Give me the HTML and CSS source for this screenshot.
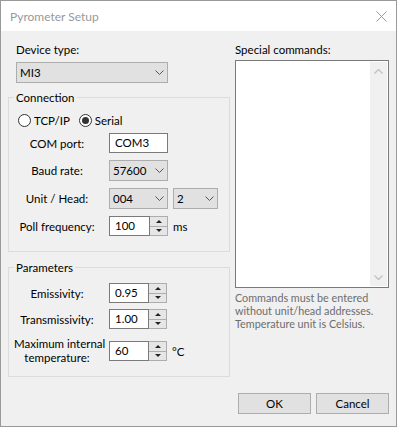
FILE: index.html
```html
<html lang="en">
<head>
    <meta charset="UTF-8">
    <title>Pyrometer Setup</title>
    <link rel="stylesheet" href="styles.css">
</head>
<body>
    <div class="window">
        <div class="titlebar">
            <span class="title">Pyrometer Setup</span>
            <svg class="close" width="11" height="11" viewBox="0 0 11 11">
                <path d="M0.5 0.5 L10.5 10.5 M10.5 0.5 L0.5 10.5" stroke="#999" stroke-width="1" fill="none"/>
            </svg>
        </div>
        <div class="content">
            <div class="left">
                <div class="label">Device type:</div>
                <div class="combo device"><span>MI3</span><svg class="chev" width="9" height="5" viewBox="0 0 9 5"><path d="M0.5 0.5 L4.5 4.5 L8.5 0.5" stroke="#555" fill="none"/></svg></div>

                <fieldset class="group conn">
                    <legend>Connection</legend>
                    <div class="radios">
                        <label class="radio"><span class="circle"></span>TCP/IP</label>
                        <label class="radio"><span class="circle on"></span>Serial</label>
                    </div>
                    <div class="form">
                        <span class="lbl">COM port:</span>
                        <div class="cell"><div class="textbox">COM3</div></div>

                        <span class="lbl">Baud rate:</span>
                        <div class="cell"><div class="combo mid"><span>57600</span><svg class="chev" width="9" height="5" viewBox="0 0 9 5"><path d="M0.5 0.5 L4.5 4.5 L8.5 0.5" stroke="#555" fill="none"/></svg></div></div>

                        <span class="lbl">Unit / Head:</span>
                        <div class="cell">
                            <div class="combo mid"><span>004</span><svg class="chev" width="9" height="5" viewBox="0 0 9 5"><path d="M0.5 0.5 L4.5 4.5 L8.5 0.5" stroke="#555" fill="none"/></svg></div>
                            <div class="combo small"><span>2</span><svg class="chev" width="9" height="5" viewBox="0 0 9 5"><path d="M0.5 0.5 L4.5 4.5 L8.5 0.5" stroke="#555" fill="none"/></svg></div>
                        </div>

                        <span class="lbl">Poll frequency:</span>
                        <div class="cell">
                            <div class="spin wide"><span class="val">100</span><span class="arrows"><i class="up"></i><i class="down"></i></span></div>
                            <span>ms</span>
                        </div>
                    </div>
                </fieldset>

                <fieldset class="group params">
                    <legend>Parameters</legend>
                    <div class="form">
                        <span class="lbl">Emissivity:</span>
                        <div class="cell"><div class="spin"><span class="val">0.95</span><span class="arrows"><i class="up"></i><i class="down"></i></span></div></div>

                        <span class="lbl">Transmissivity:</span>
                        <div class="cell"><div class="spin"><span class="val">1.00</span><span class="arrows"><i class="up"></i><i class="down"></i></span></div></div>

                        <span class="lbl two">Maximum internal<br>temperature:</span>
                        <div class="cell two">
                            <div class="spin"><span class="val">60</span><span class="arrows"><i class="up"></i><i class="down"></i></span></div>
                            <span>&deg;C</span>
                        </div>
                    </div>
                </fieldset>
            </div>

            <div class="right">
                <div class="label">Special commands:</div>
                <div class="textarea">
                    <div class="scrollbar">
                        <svg width="9" height="5" viewBox="0 0 9 5"><path d="M0.5 4.5 L4.5 0.5 L8.5 4.5" stroke="#c2c2c2" stroke-width="1.4" fill="none"/></svg>
                        <svg width="9" height="5" viewBox="0 0 9 5"><path d="M0.5 0.5 L4.5 4.5 L8.5 0.5" stroke="#c2c2c2" stroke-width="1.4" fill="none"/></svg>
                    </div>
                </div>
                <p class="note">Commands must be entered<br>without unit/head addresses.<br>Temperature unit is Celsius.</p>
                <div class="buttons">
                    <button class="btn">OK</button>
                    <button class="btn">Cancel</button>
                </div>
            </div>
        </div>
    </div>
</body>
</html>
```

FILE: styles.css
```css
*{
    box-sizing: border-box;
}
body{
    margin: 0;
    background: #f0f0f0;
    color: #000;
    font-family: Lato, "Noto Sans", sans-serif;
    font-size: 11.5px;
}
.window{
    width: 397px;
    height: 427px;
    border: 1px solid #999;
    display: flex;
    flex-direction: column;
}
.titlebar{
    height: 30px;
    background: #fff;
    display: flex;
    align-items: center;
    justify-content: space-between;
    padding: 0 9px 0 9px;
    font-size: 12px;
}
.title{
    color: #999;
}
.content{
    flex: 1;
    display: flex;
    gap: 5px;
    padding: 11px 7px 12px 7px;
}
.left{
    width: 222px;
}
.right{
    width: 154px;
    display: flex;
    flex-direction: column;
}
.label{
    line-height: 15px;
}
.left > .label{
    margin-left: 8px;
}

/* combo boxes */
.combo{
    height: 21px;
    background: #e1e1e1;
    border: 1px solid #adadad;
    display: flex;
    align-items: center;
    justify-content: space-between;
    padding: 0 3px 0 3px;
}
.device{
    margin: 5px 0 0 8px;
    width: 152px;
}
.combo.mid{
    width: 59px;
}
.combo.small{
    width: 45px;
}

/* group boxes */
.group{
    margin: 7px 0 0;
    padding: 8px 5px 15px;
    border: 1px solid #dcdcdc;
    min-width: 0;
}
.group legend{
    padding: 0 2px;
    line-height: 15px;
}
.params{
    margin-top: 8px;
    padding-bottom: 11px;
}
.radios{
    display: flex;
    gap: 9px;
    margin-left: 4px;
    line-height: 15px;
}
.radio{
    display: flex;
    align-items: center;
    gap: 3px;
}
.circle{
    width: 13px;
    height: 13px;
    border: 1px solid #333;
    border-radius: 50%;
    background: #fff;
    display: flex;
    align-items: center;
    justify-content: center;
}
.circle.on::after{
    content: "";
    width: 7px;
    height: 7px;
    border-radius: 50%;
    background: #333;
}
.form{
    display: grid;
    grid-template-columns: 86px auto;
    column-gap: 9px;
    row-gap: 7px;
    align-items: center;
    margin-top: 5px;
}
.params .form{
    margin-top: 0;
    row-gap: 6px;
}
.lbl{
    text-align: center;
    line-height: 15px;
    white-space: nowrap;
}
.lbl.two{
    line-height: 14px;
    margin-top: 2px;
}
.cell{
    display: flex;
    align-items: center;
    gap: 5px;
}
.cell.two{
    margin-top: 2px;
}
.textbox{
    width: 59px;
    height: 20px;
    background: #fff;
    border: 1px solid #7a7a7a;
    padding-left: 5px;
    line-height: 18px;
}

/* spin boxes */
.spin{
    display: flex;
    width: 58px;
    height: 20px;
}
.spin.wide{
    width: 59px;
}
.spin .val{
    flex: 1;
    background: #fff;
    border: 1px solid #7a7a7a;
    padding-left: 5px;
    line-height: 18px;
}
.spin .arrows{
    width: 18px;
    display: flex;
    flex-direction: column;
    border: 1px solid #adadad;
    border-left: none;
    background: #adadad;
    gap: 1px;
}
.spin .arrows i{
    flex: 1;
    background: #e6e6e6;
    display: flex;
    align-items: center;
    justify-content: center;
}
.spin .up::after{
    content: "";
    border-left: 3px solid transparent;
    border-right: 3px solid transparent;
    border-bottom: 3px solid #222;
}
.spin .down::after{
    content: "";
    border-left: 3px solid transparent;
    border-right: 3px solid transparent;
    border-top: 3px solid #222;
}

/* right side */
.textarea{
    margin-top: 3px;
    height: 228px;
    background: #fff;
    border: 1px solid #7a7a7a;
    padding: 1px;
    display: flex;
    justify-content: flex-end;
}
.scrollbar{
    width: 17px;
    background: #f0f0f0;
    display: flex;
    flex-direction: column;
    justify-content: space-between;
    align-items: center;
    padding: 7px 0 6px;
}
.note{
    margin: 3px 0 0;
    font-size: 10.8px;
    line-height: 13px;
    color: #6d6d6d;
}
.buttons{
    margin-top: auto;
    display: flex;
    justify-content: flex-end;
    gap: 5px;
}
.btn{
    width: 73px;
    height: 21px;
    background: #e1e1e1;
    border: 1px solid #adadad;
    font-family: inherit;
    font-size: 11.5px;
    color: #000;
    padding: 0;
}
```
